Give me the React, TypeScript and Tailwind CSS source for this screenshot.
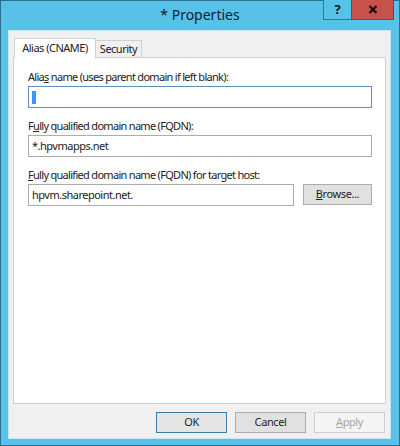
import React from "react"

const ui = { fontFamily: '"Noto Sans", "Liberation Sans", sans-serif' }

function Field({ label, children }: { label: React.ReactNode; children: React.ReactNode }) {
    return (
        <div className="flex flex-col">
            <div className="h-[15px] leading-[15px] text-[11px] text-[#222] tracking-[-0.7px]">{label}</div>
            <div className="mt-[2px]">{children}</div>
        </div>
    )
}

function Btn({ children, variant = "normal", w = "w-[71px]" }: { children: React.ReactNode; variant?: "default" | "normal" | "disabled"; w?: string }) {
    const styles = {
        default: "border-[#3d7bad] bg-[#e5e5e5] text-[#1e1e1e]",
        normal: "border-[#acacac] bg-[#e1e1e1] text-[#1e1e1e]",
        disabled: "border-[#cfcfcf] bg-[#f4f4f4] text-[#a6a6a6]",
    }[variant]
    return (
        <div className={`${w} h-[21px] border flex items-center justify-center text-[11px] tracking-[-0.4px] ${styles}`}>
            {children}
        </div>
    )
}

export default function App() {
    return (
        <div style={ui} className="w-[400px] h-[446px] bg-[#58c1e8] border border-[#2c6d8c] flex flex-col">
            {/* title bar */}
            <div className="h-[29px] grid grid-cols-[1fr_auto_1fr] shrink-0">
                <div />
                <div className="text-[14px] text-[#0f2233] leading-[27px]">* Properties</div>
                <div className="flex justify-end pr-[5px] -mt-px">
                    <div className="w-[28px] h-[20px] border border-[#2f7797] border-t-0 border-r-0 bg-[#58c1e8] flex items-center justify-center text-[13px] font-bold text-[#101820]">
                        ?
                    </div>
                    <div className="w-[43px] h-[20px] border border-[#8c3a34] border-t-0 bg-[#c7514b] flex items-center justify-center">
                        <svg width="10" height="9" viewBox="0 0 10 9">
                            <path d="M1.5 1 L8.5 8 M8.5 1 L1.5 8" stroke="#111" strokeWidth="2.2" />
                        </svg>
                    </div>
                </div>
            </div>

            {/* client area */}
            <div className="ml-[7px] mr-[8px] mb-[6px] flex-1 bg-[#f0f0f0] border border-[#c8e6f2] flex flex-col px-[4px] pt-[6px]">
                {/* tabs */}
                <div className="flex items-end h-[20px] pl-[1px]">
                    <div className="h-[20px] w-[82px] bg-white border border-[#d0d0d0] border-b-0 flex items-center justify-center text-[11px] text-[#222] tracking-[-0.5px] relative z-10 -mb-px">
                        Alias (CNAME)
                    </div>
                    <div className="h-[17px] w-[46px] bg-[#f0f0f0] border border-[#d0d0d0] border-b-0 border-l-0 flex items-center justify-center text-[11px] text-[#222] tracking-[-0.5px]">
                        Security
                    </div>
                </div>

                {/* tab panel */}
                <div className="h-[347px] bg-white border border-[#d0d0d0] flex flex-col gap-[10px] pl-[14px] pr-[13px] pt-[11px]">
                    <Field label={<>Alia<u>s</u> name (uses parent domain if left blank):</>}>
                        <div className="h-[22px] border border-[#5c8fc4] flex items-center pl-[3px]">
                            <div className="w-[4px] h-[13px] bg-[#3399ff]" />
                        </div>
                    </Field>
                    <Field label={<>F<u>u</u>lly qualified domain name (FQDN):</>}>
                        <div className="h-[22px] border border-[#acacac] flex items-center pl-[3px] text-[11px] text-[#222] tracking-[-0.5px]">
                            *.hpvmapps.net
                        </div>
                    </Field>
                    <Field label={<><u>F</u>ully qualified domain name (FQDN) for target host:</>}>
                        <div className="flex items-start gap-[9px]">
                            <div className="w-[266px] h-[22px] border border-[#acacac] flex items-center pl-[3px] text-[11px] text-[#222] tracking-[-0.5px]">
                                hpvm.sharepoint.net.
                            </div>
                            <Btn w="w-[69px]" variant="normal">
                                <span><u>B</u>rowse...</span>
                            </Btn>
                        </div>
                    </Field>
                </div>

                {/* bottom buttons */}
                <div className="flex justify-end gap-[8px] mt-[8px] pr-[1px]">
                    <Btn variant="default">OK</Btn>
                    <Btn>Cancel</Btn>
                    <Btn variant="disabled">
                        <span><u>A</u>pply</span>
                    </Btn>
                </div>
            </div>
        </div>
    )
}
